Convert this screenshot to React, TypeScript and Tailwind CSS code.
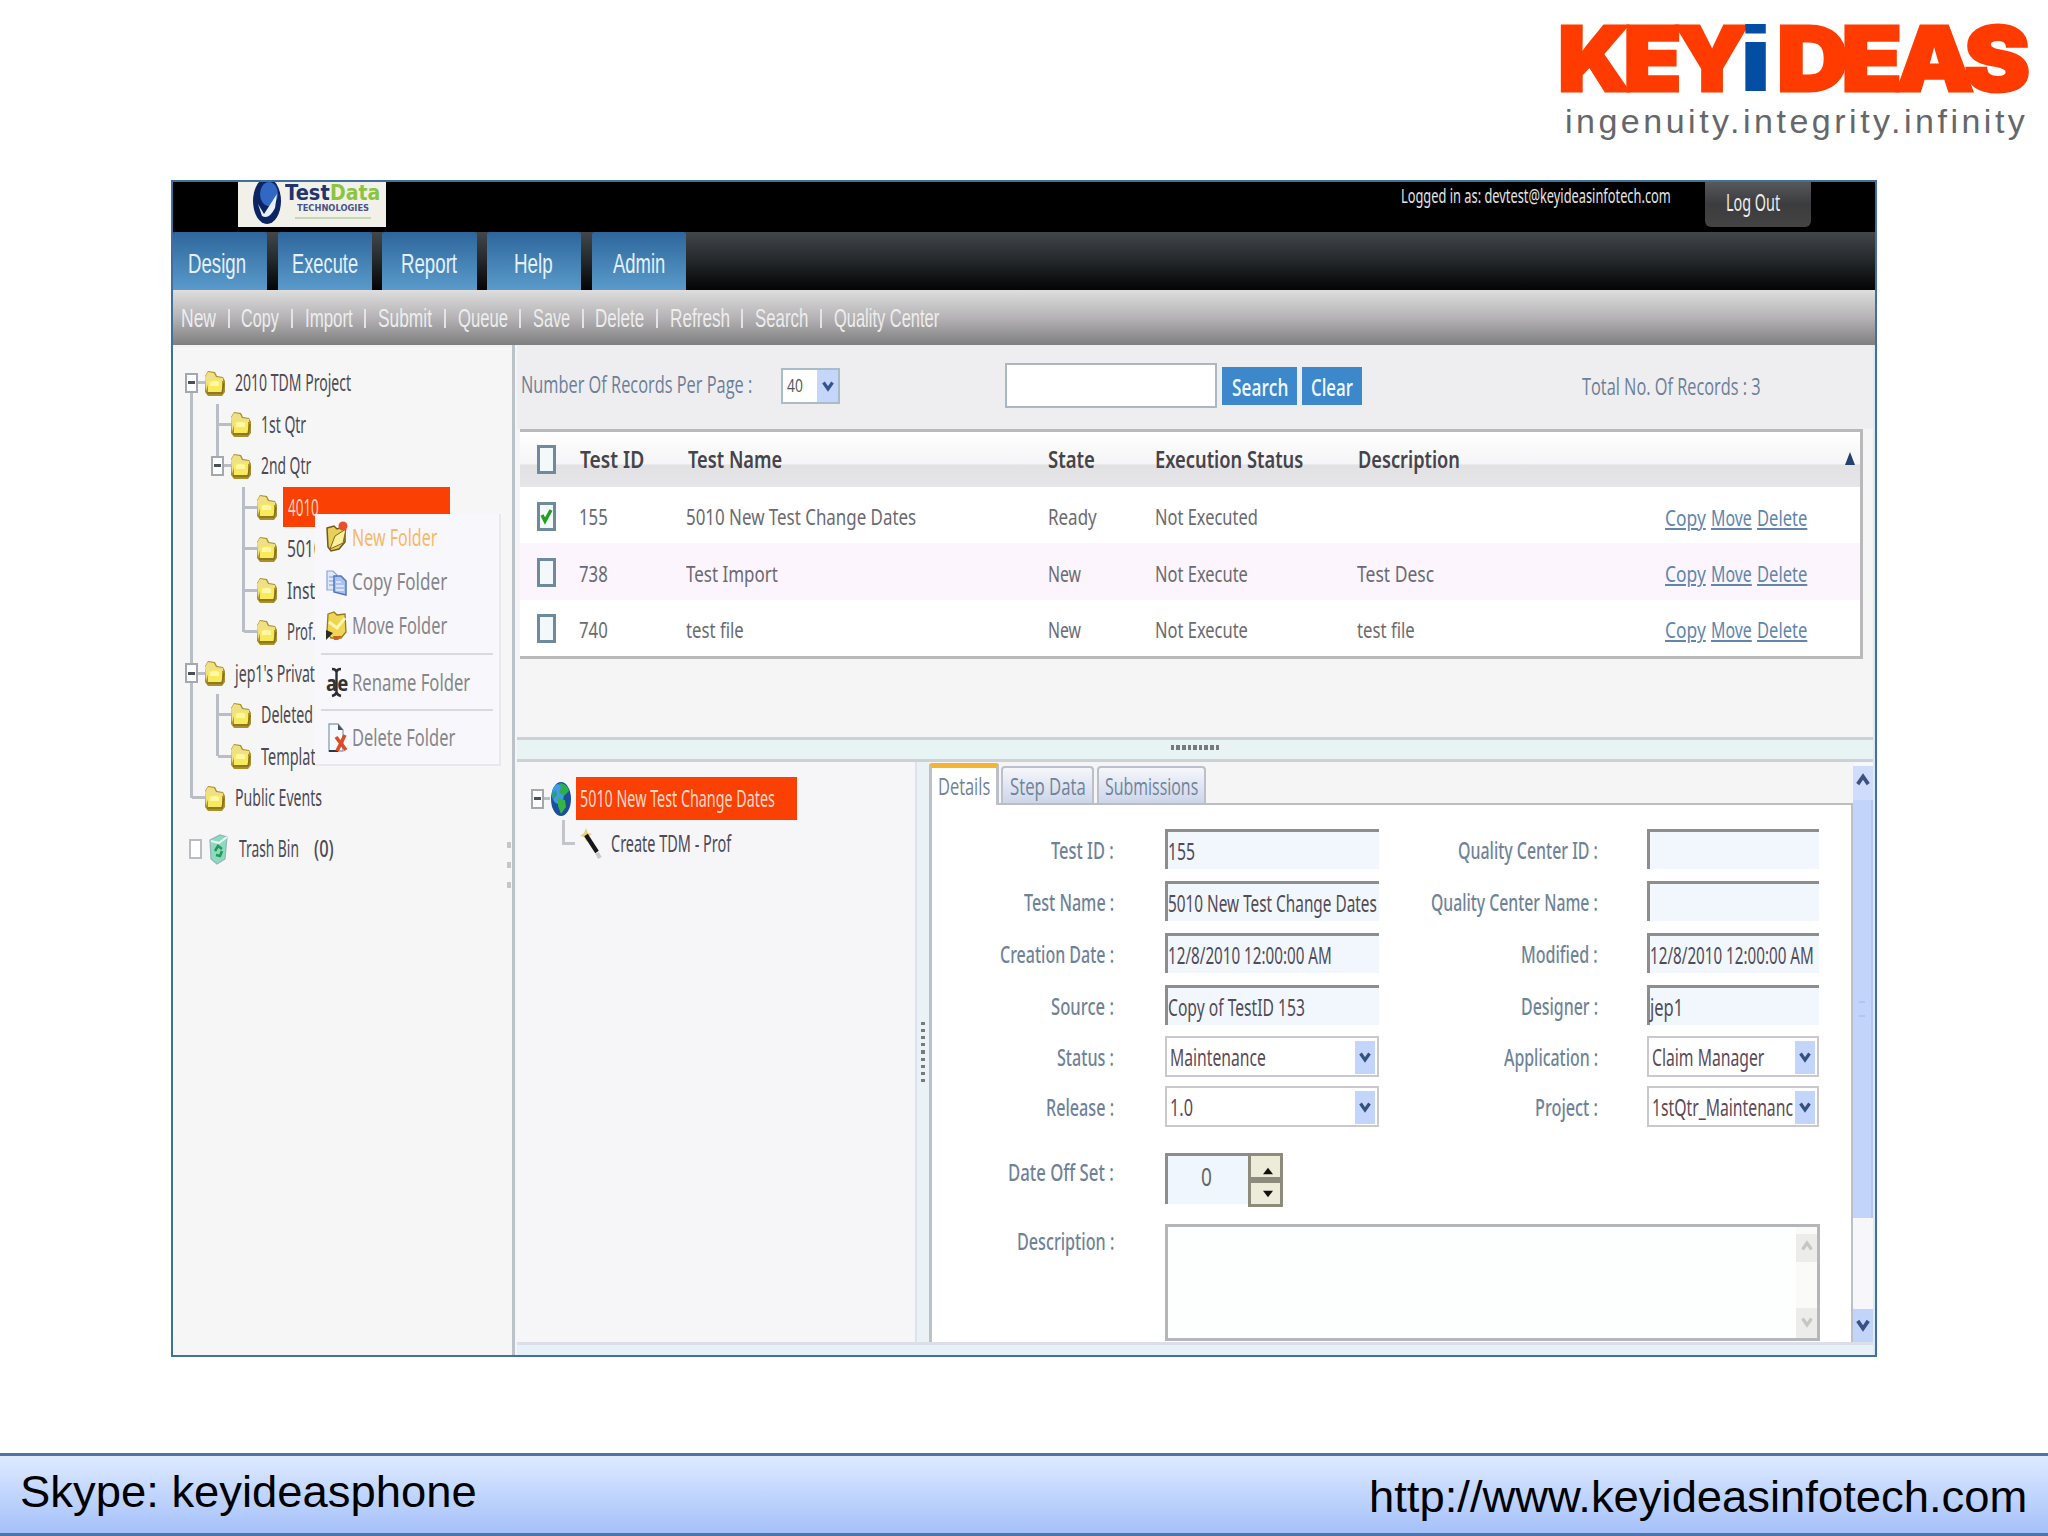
import { useLayoutEffect, useRef, useState, type ReactNode } from 'react'
import clsx from 'clsx'

interface FitProps {
  w: number
  className?: string
  children: ReactNode
}

// Squeezes or stretches a single line of text to an exact width
function Fit({ w, className, children }: FitProps) {
  const ref = useRef<HTMLSpanElement>(null)
  const [scale, setScale] = useState(1)

  useLayoutEffect(() => {
    if (ref.current) setScale(w / ref.current.offsetWidth)
  }, [w, children])

  return (
    <span className={clsx('block shrink-0 whitespace-nowrap leading-none', className)} style={{ width: w }}>
      <span ref={ref} className="inline-block origin-left align-top" style={{ transform: `scaleX(${scale})` }}>
        {children}
      </span>
    </span>
  )
}

/* ---------- icons ---------- */

function FolderIcon() {
  return (
    <svg className="h-[28px] w-[24px] shrink-0" viewBox="0 0 24 28">
      <path d="M2 7 L5 2 L12 3 L14 7 L20 8 L22 12 V23 L19 27 H5 L2 23 Z" fill="#a8902c" />
      <path d="M2 8 L5 3 L11 4 L13 8 L20 9 V12 H6 L3 22 Z" fill="#f0e084" />
      <path d="M5 12 Q12 10 19 12 V23 H5 Z" fill="#f8ea5c" />
      <path d="M7 13 Q12 11 16 13 V17 H7 Z" fill="#fff8a4" />
      <path d="M4 24 H19 L21 14" fill="none" stroke="#86701c" strokeWidth="1.5" />
    </svg>
  )
}

function NewFolderIcon() {
  return (
    <svg className="h-[32px] w-[24px] shrink-0" viewBox="0 0 24 32">
      <path d="M2 7 L9 5 L12 8 L20 5 V21 L14 28 L6 30 L3 26 Z" fill="#e8cf58" stroke="#6f5a1c" strokeWidth="1.5" />
      <path d="M5 28 L10 15 L21 8 L18 22 Z" fill="#fbf09a" stroke="#7d671f" strokeWidth="1" />
      <circle cx="18" cy="5" r="4.5" fill="#e8502c" />
    </svg>
  )
}

function CopyIcon() {
  return (
    <svg className="h-[30px] w-[24px] shrink-0" viewBox="0 0 24 30">
      <path d="M2 4 H8 L12 8 V23 H2 Z" fill="#dfe8fa" stroke="#8ba4d8" strokeWidth="1.2" />
      <path d="M4 10 H9 M4 14 H9 M4 18 H9" stroke="#7d97d3" strokeWidth="1.2" />
      <path d="M9 9 H16 L21 14 V28 L9 25 Z" fill="#a9c2f2" stroke="#5374bd" strokeWidth="1.5" />
      <path d="M11 15 H16 M11 19 H19 M11 23 H19" stroke="#e9f0ff" strokeWidth="1.5" />
    </svg>
  )
}

function MoveIcon() {
  return (
    <svg className="h-[32px] w-[24px] shrink-0" viewBox="0 0 24 32">
      <path d="M3 4 L9 2 L12 5 L20 4 L21 22 L16 28 H6 L2 22 Z" fill="#efd554" stroke="#957a20" strokeWidth="1.3" />
      <path d="M4 12 L12 18 L20 8" fill="none" stroke="#fff7b0" strokeWidth="3" />
      <path d="M1 20 L8 23 L1 30 Z" fill="#2c2c22" />
      <path d="M8 26 H17 L13 30 H9 Z" fill="#d3611e" />
    </svg>
  )
}

function RenameIcon() {
  return (
    <span className="relative flex h-[32px] w-[24px] shrink-0 items-center justify-center text-[#333]">
      <Fit w={22} className="font-['Noto_Sans'] text-[22px] font-bold">ae</Fit>
      <svg className="absolute inset-0" viewBox="0 0 24 32">
        <path d="M7 3 Q11 3 11.5 6 Q12 3 16 3 M11.5 5 V27 M7 30 Q11 29 11.5 26 Q12 29 16 30" fill="none" stroke="#2b2f33" strokeWidth="2.4" />
      </svg>
    </span>
  )
}

function DeleteIcon() {
  return (
    <svg className="h-[32px] w-[24px] shrink-0" viewBox="0 0 24 32">
      <path d="M4 2 H13 L18 8 V29 H4 Z" fill="#f7fafc" stroke="#8fa5b3" strokeWidth="1.4" />
      <path d="M13 2 L18 8 H13 Z" fill="#44505a" />
      <path d="M4 29 H13" stroke="#2b3544" strokeWidth="2" />
      <path d="M11 15 L21 28 M20 13 L12 29" stroke="#dd4a26" strokeWidth="3.6" />
    </svg>
  )
}

function TrashIcon() {
  return (
    <svg className="h-[32px] w-[20px] shrink-0" viewBox="0 0 20 32">
      <path d="M2 7 L12 2 L19 4 L17 26 L9 31 L3 26 Z" fill="#8fd9c0" stroke="#93b5b3" strokeWidth="1.2" />
      <path d="M3 8 L11 10 L19 4" fill="none" stroke="#e6fbf4" strokeWidth="2" />
      <path d="M7 18 L10 13 L14 16 M14 18 L12 23 L8 22" fill="none" stroke="#1f9a58" strokeWidth="2.6" />
    </svg>
  )
}

function GlobeIcon() {
  return (
    <svg className="h-[36px] w-[22px] shrink-0" viewBox="0 0 22 36">
      <ellipse cx="11" cy="18" rx="10" ry="17" fill="#1a4f9c" />
      <ellipse cx="8" cy="13" rx="6" ry="10" fill="#3d9bea" />
      <path d="M9 2 Q17 2 19 10 L14 15 L9 11 L11 6 Z" fill="#2fae4c" />
      <path d="M8 17 L15 19 L16 26 L11 33 L8 25 Z" fill="#35b545" />
      <path d="M2 12 L6 9 L7 14 L3 19 Z" fill="#2e9c74" />
    </svg>
  )
}

function WandIcon() {
  return (
    <svg className="h-[34px] w-[24px] shrink-0" viewBox="0 0 24 34">
      <path d="M7 1 L9 6 L13 7 L9 10 L8 15 L5 10 L1 9 L5 6 Z" fill="#e8cf7c" />
      <path d="M7 8 L18 25" stroke="#16161c" strokeWidth="4.2" />
      <path d="M18 26 L21 31" stroke="#c9c9c9" strokeWidth="4" />
    </svg>
  )
}

function Chevron({ up, className }: { up?: boolean; className?: string }) {
  return (
    <svg className={clsx('h-[12px] w-[12px]', className)} viewBox="0 0 12 12">
      <path d={up ? 'M1.5 9.5 L6 3 L10.5 9.5' : 'M1.5 2.5 L6 9 L10.5 2.5'} fill="none" stroke="currentColor" strokeWidth="3.2" />
    </svg>
  )
}

/* ---------- header ---------- */

function Brand() {
  return (
    <header className="flex h-[180px] flex-col items-end pr-[25px] pt-[13px]">
      <div className="flex h-[91px] items-center font-['Inter'] text-[89px] font-black text-[#ff3b00]">
        <Fit w={184} className="-mr-[7px] tracking-[-6px] [-webkit-text-stroke:3px_#ff3b00]">KEY</Fit>
        <Fit w={42} className="font-['Liberation_Sans'] text-[92px] font-bold text-[#034ea2]">i</Fit>
        <Fit w={246} className="tracking-[-6px] [-webkit-text-stroke:3px_#ff3b00]">DEAS</Fit>
      </div>
      <Fit w={463} className="-mr-[5px] font-['Liberation_Sans'] text-[34px] tracking-[3.5px] text-[#66676a]">
        ingenuity.integrity.infinity
      </Fit>
    </header>
  )
}

function TopBar() {
  return (
    <div className="flex h-[50px] items-start bg-black">
      <div className="ml-[65px] flex h-[45px] w-[148px] bg-[#f1f1ea]">
        <svg className="ml-[13px] h-[44px] w-[30px] shrink-0" viewBox="0 0 30 44">
          <ellipse cx="16" cy="19" rx="14" ry="23" fill="#0d2463" />
          <ellipse cx="18" cy="12" rx="9" ry="12" fill="#3068c4" />
          <path d="M7 22 L13 32 L26 12 L24 26 Q18 38 11 34 Z" fill="#e8effa" />
        </svg>
        <div className="ml-[4px] flex flex-col items-center">
          <div className="flex font-['DejaVu_Sans'] text-[22px] font-bold">
            <Fit w={45} className="text-[#22336e]">Test</Fit>
            <Fit w={50} className="text-[#8bc53f]">Data</Fit>
          </div>
          <Fit w={72} className="font-['DejaVu_Sans'] text-[9px] font-bold text-[#46528a]">TECHNOLOGIES</Fit>
          <div className="mt-[4px] h-[2px] w-[76px] bg-[#c3d8b3]" />
        </div>
      </div>
      <Fit w={270} className="ml-auto pt-[4px] font-['Noto_Sans'] text-[20px] text-[#e4e4e4]">
        Logged in as: devtest@keyideasinfotech.com
      </Fit>
      <div className="ml-[34px] mr-[64px] flex h-[45px] w-[106px] items-center justify-center rounded-b-[6px] bg-linear-to-b from-[#56585c] via-[#3c3c3e] to-[#444] pb-[5px] pr-[10px]">
        <Fit w={54} className="font-['Noto_Sans'] text-[24px] text-[#eee]">Log Out</Fit>
      </div>
    </div>
  )
}

const tabs = [
  { label: 'Design', w: 58, pad: 'pr-[6px]' },
  { label: 'Execute', w: 66, pad: 'pl-px' },
  { label: 'Report', w: 56, pad: 'pr-px' },
  { label: 'Help', w: 39, pad: 'pr-px' },
  { label: 'Admin', w: 52, pad: 'pl-px' }
]

function NavTabs() {
  return (
    <nav className="flex h-[58px] gap-[10.5px] bg-linear-to-b from-[#42474b] via-[#24282b] to-[#050506]">
      {tabs.map((t) => (
        <div
          key={t.label}
          className={clsx(
            'flex w-[94.2px] items-center justify-center rounded-t-[3px] bg-linear-to-b from-[#2e669c] to-[#5a9bcb] pt-[5px]',
            t.pad
          )}
        >
          <Fit w={t.w} className="font-['Liberation_Sans'] text-[28px] text-[#e3f1fb]">{t.label}</Fit>
        </div>
      ))}
    </nav>
  )
}

const actions = [
  { label: 'New', w: 35 },
  { label: 'Copy', w: 38 },
  { label: 'Import', w: 48 },
  { label: 'Submit', w: 54 },
  { label: 'Queue', w: 50 },
  { label: 'Save', w: 37 },
  { label: 'Delete', w: 49 },
  { label: 'Refresh', w: 60 },
  { label: 'Search', w: 53 },
  { label: 'Quality Center', w: 105 }
]

function ActionBar() {
  return (
    <div className="flex h-[55px] items-center bg-linear-to-b from-[#dedede] via-[#b5b3b5] via-50% to-[#7f7f80] pl-[8px] pt-px font-['Liberation_Sans'] text-[26px] text-[#ededed]">
      {actions.map((a, i) => (
        <div key={a.label} className="flex items-center">
          {i > 0 && (
            <div className="flex w-[25.4px] justify-center">
              <div className="h-[19px] w-[2px] bg-[#e4e4e4]" />
            </div>
          )}
          <Fit w={a.w}>{a.label}</Fit>
        </div>
      ))}
    </div>
  )
}

/* ---------- folder tree ---------- */

// one letter per indent column: i = line, t = tee, l = corner, x = blank,
// a/b/c = expander with line below / above / both
interface TreeRow {
  guides: string
  label: string
  w: number
  active?: boolean
}

const treeRows: TreeRow[] = [
  { guides: 'a', label: '2010 TDM Project', w: 116 },
  { guides: 'it', label: '1st Qtr', w: 45 },
  { guides: 'ib', label: '2nd Qtr', w: 50 },
  { guides: 'ixt', label: '4010', w: 31, active: true },
  { guides: 'ixt', label: '5010', w: 36 },
  { guides: 'ixt', label: 'Inst', w: 28 },
  { guides: 'ixl', label: 'Prof.', w: 29 },
  { guides: 'c', label: "jep1's Privat", w: 80 },
  { guides: 'it', label: 'Deleted', w: 52 },
  { guides: 'il', label: 'Templat...', w: 66 },
  { guides: 'l', label: 'Public Events', w: 87 }
]

function Expander() {
  return (
    <div className="flex h-[20px] w-[13px] shrink-0 items-center justify-center border-2 border-[#a3a8ae] bg-white">
      <div className="h-[3px] w-[7px] bg-[#4c4f55]" />
    </div>
  )
}

function Guide({ kind }: { kind: string }) {
  const top = 'itlbc'.includes(kind)
  const bottom = 'itac'.includes(kind)
  const box = 'abc'.includes(kind)
  return (
    <div className="flex w-[26px] shrink-0 self-stretch">
      <div className="flex w-[20px] flex-col items-center">
        <div className={clsx('w-[3px] flex-1', top && 'bg-[#b9bdc6]')} />
        {box && <Expander />}
        <div className={clsx('w-[3px] flex-1', bottom && 'bg-[#b9bdc6]')} />
      </div>
      <div className="flex flex-1 items-center">
        {'tlabc'.includes(kind) && <div className={clsx('h-[3px] shrink-0 bg-[#b9bdc6]', box ? 'ml-[-3px] w-[7px]' : 'ml-[-9px] w-[13px]')} />}
      </div>
    </div>
  )
}

const menuItems = [
  { label: 'New Folder', w: 85, icon: <NewFolderIcon />, row: 'h-[46px] text-[#f7b968]' },
  { label: 'Copy Folder', w: 95, icon: <CopyIcon />, row: 'h-[43px]' },
  { label: 'Move Folder', w: 95, icon: <MoveIcon />, row: 'h-[45px]' },
  { label: 'Rename Folder', w: 118, icon: <RenameIcon />, row: 'mt-[5px] h-[56px] border-t-2 border-[#d9dadf]' },
  { label: 'Delete Folder', w: 103, icon: <DeleteIcon />, row: 'h-[55px] border-t-2 border-[#d9dadf]' }
]

function ContextMenu() {
  return (
    <div className="absolute left-[142px] top-[167px] w-[186px] border-b-2 border-r-2 border-[#e8e8ee] bg-[#f8f8fc] px-[6px]">
      {menuItems.map((m) => (
        <div key={m.label} className={clsx('flex items-center gap-[3px] pl-[4px] text-[#85868a]', m.row)}>
          {m.icon}
          <Fit w={m.w} className="font-['Noto_Sans'] text-[23px]">{m.label}</Fit>
        </div>
      ))}
    </div>
  )
}

function FolderPanel() {
  return (
    <aside className="relative flex w-[339px] shrink-0 flex-col border-t-2 border-[#f0f0f0] bg-[#f7f6f7] pl-[8px] pt-[15px] font-['Noto_Sans'] text-[23px] text-[#4c4a54]">
      {treeRows.map((r) => (
        <div key={r.label} className="flex h-[41.5px] items-center">
          {r.guides.split('').map((g, i) => (
            <Guide key={i} kind={g} />
          ))}
          <div className="-ml-[4px]">
            <FolderIcon />
          </div>
          {r.active ? (
            <div className="ml-[4px] flex h-[40px] w-[167px] items-center bg-[#fa4002] pl-[5px] text-[#fcd3c0]">
              <Fit w={r.w}>{r.label}</Fit>
            </div>
          ) : (
            <Fit w={r.w} className="ml-[8px]">{r.label}</Fit>
          )}
        </div>
      ))}
      <div className="mt-[11px] flex h-[38px] items-center pl-[8px]">
        <div className="h-[20px] w-[13px] border-2 border-[#b9bcc0] bg-white" />
        <div className="ml-[6px] flex">
          <TrashIcon />
        </div>
        <Fit w={60} className="ml-[11px]">Trash Bin</Fit>
        <Fit w={20} className="ml-[15px] font-medium">(0)</Fit>
      </div>
      <div className="absolute right-[1px] top-[495px] flex flex-col gap-[14px]">
        <div className="h-[6px] w-[4px] bg-[#c6c6c8]" />
        <div className="h-[6px] w-[4px] bg-[#c6c6c8]" />
        <div className="h-[6px] w-[4px] bg-[#c6c6c8]" />
      </div>
      <ContextMenu />
    </aside>
  )
}

/* ---------- records table ---------- */

function Toolbar() {
  return (
    <div className="flex h-[84px] items-center bg-[#eeedef] pb-[3px] font-['Open_Sans'] text-[24px] text-[#6b7f97]">
      <Fit w={231} className="-mt-[3px] ml-[4px] font-medium">Number Of Records Per Page :</Fit>
      <div className="ml-[29px] flex h-[36px] w-[59px] items-center border-2 border-[#a9bccb] bg-white pl-[4px]">
        <Fit w={16} className="text-[19px] text-[#555]">40</Fit>
        <div className="ml-auto flex h-full w-[21px] items-center justify-center bg-[#c5d6fb] text-[#34548f]">
          <Chevron />
        </div>
      </div>
      <div className="ml-[165px] h-[45px] w-[212px] border-2 border-[#abb7c2] bg-white" />
      <div className="ml-[5px] flex h-[38px] w-[75px] items-center justify-center bg-[#3d87cb] pt-[2px] text-[#f0f8ff]">
        <Fit w={56} className="font-semibold">Search</Fit>
      </div>
      <div className="ml-[5px] flex h-[38px] w-[60px] items-center justify-center bg-[#3d87cb] pt-[2px] text-[#f0f8ff]">
        <Fit w={42} className="font-semibold">Clear</Fit>
      </div>
      <Fit w={179} className="ml-auto mr-[112px] font-medium">Total No. Of Records : 3</Fit>
    </div>
  )
}

function Checkbox({ checked }: { checked?: boolean }) {
  return (
    <div className="flex h-[29px] w-[19px] items-center justify-center border-[3px] border-[#6f8a9c] bg-[#f3f8fa]">
      {checked && (
        <svg className="h-[18px] w-[13px]" viewBox="0 0 13 18">
          <path d="M2 8 L5 14 L11 3" fill="none" stroke="#22a022" strokeWidth="3.4" />
        </svg>
      )}
    </div>
  )
}

const cols = 'grid grid-cols-[43px_106px_362px_107px_203px_307px_1fr] items-center pl-[17px]'

const records = [
  { id: '155', name: '5010 New Test Change Dates', nameW: 230, state: 'Ready', stateW: 49, exec: 'Not Executed', execW: 103, desc: '', descW: 0, checked: true },
  { id: '738', name: 'Test Import', nameW: 92, state: 'New', stateW: 33, exec: 'Not Execute', execW: 93, desc: 'Test Desc', descW: 77 },
  { id: '740', name: 'test file', nameW: 58, state: 'New', stateW: 33, exec: 'Not Execute', execW: 93, desc: 'test file', descW: 58 }
]

const rowLinks = [
  { label: 'Copy', w: 41 },
  { label: 'Move', w: 41 },
  { label: 'Delete', w: 50 }
]

function RecordsTable() {
  return (
    <div className="ml-[3px] mr-[10px] border-b-[3px] border-r-[3px] border-t-[3px] border-[#b9b8ba] bg-white font-['Noto_Sans']">
      <div className={clsx(cols, 'h-[55px] bg-[linear-gradient(#ffffff,#f5f4f6_58%,#e2e1e4_60%,#e6e5e7)] text-[22.5px] font-semibold text-[#45444b]')}>
        <Checkbox />
        <Fit w={64} className="mt-[2px]">Test ID</Fit>
        <Fit w={94} className="ml-[2px] mt-[2px]">Test Name</Fit>
        <Fit w={47} className="mt-[2px]">State</Fit>
        <Fit w={148} className="mt-[2px]">Execution Status</Fit>
        <Fit w={102} className="mt-[2px]">Description</Fit>
        <svg className="mb-[2px] ml-auto mr-[5px] h-[13px] w-[10px]" viewBox="0 0 10 13">
          <path d="M5 0 L10 13 H0 Z" fill="#23406e" />
        </svg>
      </div>
      {records.map((r) => (
        <div
          key={r.id}
          className={clsx(cols, 'h-[56.3px] text-[22.5px] text-[#6b6a70]', r.id === '738' && 'bg-[#fcf5fd]')}
        >
          <div className="mt-[2px]">
            <Checkbox checked={r.checked} />
          </div>
          <Fit w={29} className="-ml-px mt-[5px]">{r.id}</Fit>
          <Fit w={r.nameW} className="mt-[5px]">{r.name}</Fit>
          <Fit w={r.stateW} className="mt-[5px]">{r.state}</Fit>
          <Fit w={r.execW} className="mt-[5px]">{r.exec}</Fit>
          {r.desc ? <Fit w={r.descW} className="-ml-px mt-[5px]">{r.desc}</Fit> : <span />}
          <div className="mt-[6px] flex gap-[5px] text-[#6286ab]">
            {rowLinks.map((l) => (
              <Fit key={l.label} w={l.w}>
                <a className="underline decoration-2 underline-offset-2">{l.label}</a>
              </Fit>
            ))}
          </div>
        </div>
      ))}
    </div>
  )
}

/* ---------- test tree + details ---------- */

function TestTree() {
  return (
    <div className="w-[398px] shrink-0 bg-[#f6f5f8] pl-[14px] pt-[15px] font-['Noto_Sans'] text-[23.5px]">
      <div className="flex h-[43px] items-center">
        <Expander />
        <div className="h-[3px] w-[6px] bg-[#b9bdc6]" />
        <GlobeIcon />
        <div className="ml-[4px] flex h-[43px] w-[221px] items-center bg-[#fa4002] pl-[4px] text-[#ffd9c9]">
          <Fit w={195}>5010 New Test Change Dates</Fit>
        </div>
      </div>
      <div className="flex h-[48px] items-center pl-[31px]">
        <div className="mb-[23px] h-[25px] w-[13px] border-b-[3px] border-l-[3px] border-[#c4c5cb]" />
        <div className="ml-[4px]">
          <WandIcon />
        </div>
        <Fit w={120} className="ml-[8px] text-[#4c4a54]">Create TDM - Prof</Fit>
      </div>
    </div>
  )
}

interface FieldProps {
  label: string
  labelW: number
  value?: string
  valueW?: number
  select?: boolean
}

function Label({ children, w }: { children: ReactNode; w: number }) {
  return (
    <div className="flex justify-end pr-px font-medium text-[#6f8398]">
      <Fit w={w}>{children}</Fit>
    </div>
  )
}

function Field({ label, labelW, value, valueW = 0, select }: FieldProps) {
  return (
    <>
      <Label w={labelW}>{label} :</Label>
      {select ? (
        <div className="flex h-[41px] items-center self-start border-2 border-[#c8c8ce] bg-white pl-[3px] pr-[2px] pt-px text-[#5a4a57]">
          <Fit w={valueW}>{value}</Fit>
          <div className="ml-auto flex h-[33px] w-[20px] shrink-0 items-center justify-center bg-[#c3d5fb] text-[#35527f]">
            <Chevron />
          </div>
        </div>
      ) : (
        <div className="flex h-[40px] items-center self-start border-l-[3px] border-t-[3px] border-[#8d8d8c] bg-[#f1f7fc] text-[#524b57]">
          {value && <Fit w={valueW}>{value}</Fit>}
        </div>
      )}
    </>
  )
}

const leftFields: FieldProps[] = [
  { label: 'Test ID', labelW: 63, value: '155', valueW: 27 },
  { label: 'Test Name', labelW: 90, value: '5010 New Test Change Dates', valueW: 209 },
  { label: 'Creation Date', labelW: 114, value: '12/8/2010 12:00:00 AM', valueW: 164 },
  { label: 'Source', labelW: 63, value: 'Copy of TestID 153', valueW: 137 },
  { label: 'Status', labelW: 57, value: 'Maintenance', valueW: 96, select: true },
  { label: 'Release', labelW: 68, value: '1.0', valueW: 23, select: true }
]

const rightFields: FieldProps[] = [
  { label: 'Quality Center ID', labelW: 140 },
  { label: 'Quality Center Name', labelW: 167 },
  { label: 'Modified', labelW: 77, value: '12/8/2010 12:00:00 AM', valueW: 164 },
  { label: 'Designer', labelW: 77, value: 'jep1', valueW: 33 },
  { label: 'Application', labelW: 94, value: 'Claim Manager', valueW: 112, select: true },
  { label: 'Project', labelW: 63, value: '1stQtr_Maintenanc', valueW: 141, select: true }
]

function DetailsForm() {
  return (
    <div className="flex-1 border-l-[3px] border-r-2 border-[#bcc0c8] bg-white pt-[24px] font-['Noto_Sans'] text-[24px]">
      <div className="flex">
        <div className="grid w-[447px] grid-cols-[183px_214px] grid-rows-[52px_52px_52px_51px_50px_50px] gap-x-[50px] [&>*:nth-child(odd)]:pt-[9px]">
          {leftFields.map((f) => (
            <Field key={f.label} {...f} />
          ))}
        </div>
        <div className="ml-[37px] grid grid-cols-[183px_172px] grid-rows-[52px_52px_52px_51px_50px_50px] gap-x-[48px] [&>*:nth-child(odd)]:pt-[9px]">
          {rightFields.map((f) => (
            <Field key={f.label} {...f} />
          ))}
        </div>
      </div>
      <div className="mt-[17px] flex h-[54px] gap-[50px]">
        <div className="w-[183px] pt-[7px]">
          <Label w={106}>Date Off Set :</Label>
        </div>
        <div className="flex items-start">
          <div className="flex h-[51px] w-[83px] items-center justify-center border-l-[3px] border-t-[3px] border-[#8d8d8c] bg-[#f0f6fd] pb-[9px] pr-[3px] text-[#666]">
            <Fit w={11} className="text-[26px]">0</Fit>
          </div>
          <div className="flex h-[54px] w-[35px] flex-col">
            <div className="flex h-[27px] items-end justify-center border-[3px] border-[#8c8b7c] bg-[#edecd8] pb-[2px] pl-[5px]">
              <svg className="h-[8px] w-[10px]" viewBox="0 0 12 8"><path d="M6 0 L12 8 H0 Z" fill="#111" /></svg>
            </div>
            <div className="flex h-[27px] items-center justify-center border-[3px] border-[#8c8b7c] bg-[#edecd8] pl-[5px]">
              <svg className="h-[8px] w-[10px]" viewBox="0 0 12 8"><path d="M6 8 L12 0 H0 Z" fill="#111" /></svg>
            </div>
          </div>
        </div>
      </div>
      <div className="mt-[17px] flex gap-[50px]">
        <div className="w-[183px] pt-[5px]">
          <Label w={97}>Description :</Label>
        </div>
        <div className="flex h-[117px] w-[655px] justify-end border-[3px] border-[#b4b6ba] bg-[#fdfefe]">
          <div className="flex w-[21px] flex-col justify-between bg-[#fafaf8] pt-[7px] text-[#c6c6c4]">
            <div className="flex h-[28px] items-center justify-center bg-[#ececea] pb-[4px]"><Chevron up /></div>
            <div className="flex h-[30px] items-center justify-center bg-[#ececea] pb-[2px]"><Chevron /></div>
          </div>
        </div>
      </div>
    </div>
  )
}

function DetailsPane() {
  return (
    <div className="flex flex-1">
      <div className="flex flex-1 flex-col">
        <div className="flex h-[44px] items-end border-b-[3px] border-[#bdbdc1] bg-[#f6f5f6] font-['Open_Sans'] text-[24px] font-medium text-[#6f8398]">
          <div className="-mb-[3px] flex h-[43px] w-[70px] items-center justify-center rounded-t-[3px] border-x-[3px] border-t-[5px] border-x-[#bcc0c8] border-t-[#f5b431] bg-white pb-[3px]">
            <Fit w={52}>Details</Fit>
          </div>
          <div className="ml-[2px] flex h-[37px] w-[93px] items-center justify-center rounded-t-[4px] border-2 border-b-0 border-[#bcc0cc] bg-linear-to-b from-[#f6f7fb] to-[#ccd5ea] pt-px">
            <Fit w={76}>Step Data</Fit>
          </div>
          <div className="ml-[3px] flex h-[37px] w-[109px] items-center justify-center rounded-t-[4px] border-2 border-b-0 border-[#bcc0cc] bg-linear-to-b from-[#f6f7fb] to-[#ccd5ea] pt-px">
            <Fit w={93}>Submissions</Fit>
          </div>
        </div>
        <div className="-mt-px flex flex-1 flex-col">
          <DetailsForm />
        </div>
      </div>
      <div className="flex w-[20px] flex-col bg-[#f7f7fb] pt-[4px] text-[#3a5282]">
        <div className="flex h-[34px] items-center justify-center bg-[#cfdcfb]">
          <Chevron up className="mb-[7px] h-[14px] w-[14px]" />
        </div>
        <div className="flex h-[418px] items-center justify-center border-r-2 border-[#b3c6f0] bg-[#c3d4fb]">
          <div className="h-[16px] w-[6px] border-y-2 border-[#b2c5f2]" />
        </div>
        <div className="mt-auto flex h-[33px] items-center justify-center bg-[#c3d4fb] pb-[2px]">
          <Chevron className="h-[14px] w-[14px]" />
        </div>
      </div>
    </div>
  )
}

function Dots({ vertical }: { vertical?: boolean }) {
  return (
    <div className={clsx('flex', vertical ? 'flex-col gap-[4px]' : 'gap-[2px]')}>
      {Array.from({ length: 9 }, (_, i) => (
        <div key={i} className={clsx('bg-[#777b7e]', vertical ? 'h-[3.2px] w-[4px]' : 'h-[5px] w-[3.6px]')} />
      ))}
    </div>
  )
}

export default function App() {
  return (
    <div className="flex h-[1536px] w-[2048px] flex-col overflow-hidden bg-white">
      <Brand />

      <main className="ml-[171px] flex h-[1177px] w-[1706px] flex-col border-2 border-[#40709f]">
        <TopBar />
        <NavTabs />
        <ActionBar />

        <div className="flex flex-1">
          <FolderPanel />
          <div className="w-[5px] border-l-[3px] border-[#bcc2c8] bg-[#f3f6f9]" />

          <div className="flex flex-1 flex-col border-r-2 border-[#dceaf8] bg-[#f6f5f6]">
            <Toolbar />
            <RecordsTable />

            {/* horizontal splitter */}
            <div className="mt-auto flex h-[25px] shrink-0 justify-center border-y-[3px] border-[#cbd1d4] bg-[#e8f3f3] pt-[5px]">
              <Dots />
            </div>

            <div className="flex h-[580px] shrink-0">
              <TestTree />
              {/* vertical splitter */}
              <div className="flex w-[14px] shrink-0 items-center justify-center border-l-2 border-[#dbe3ee] bg-[#eaf2f6]">
                <Dots vertical />
              </div>
              <DetailsPane />
            </div>
            <div className="h-[13px] shrink-0 border-t-[3px] border-[#dcdfe8] bg-[#e6f2f8]" />
          </div>
        </div>
      </main>

      <footer className="mt-auto flex h-[83px] justify-between border-y-[3px] border-[#4a76ad] bg-linear-to-b from-[#deeaff] to-[#a5c1fa] pl-[20px] pr-[21px] font-['Liberation_Sans'] text-[44px] text-black">
        <Fit w={457} className="pt-[14px]">Skype: keyideasphone</Fit>
        <Fit w={658} className="pt-[19px]">http://www.keyideasinfotech.com</Fit>
      </footer>
    </div>
  )
}
